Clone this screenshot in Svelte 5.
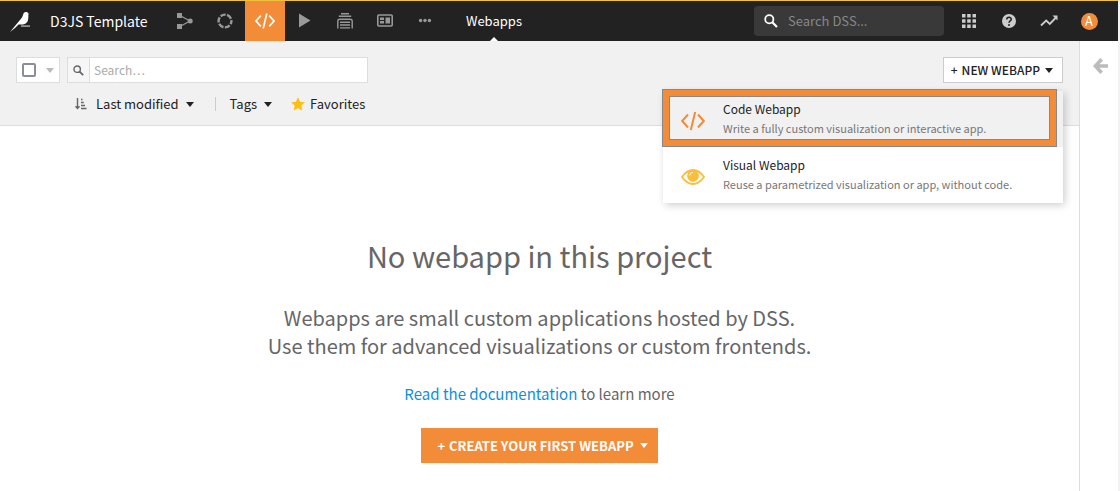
<script>
  const navItems = [
    { id: 'flow', label: 'Flow' },
    { id: 'lab', label: 'Lab' },
    { id: 'code', label: 'Code' },
    { id: 'jobs', label: 'Jobs' },
    { id: 'automation', label: 'Automation' },
    { id: 'dashboards', label: 'Dashboards' },
    { id: 'more', label: 'More' }
  ];

  const webappTypes = [
    {
      id: 'code',
      title: 'Code Webapp',
      desc: 'Write a fully custom visualization or interactive app.'
    },
    {
      id: 'visual',
      title: 'Visual Webapp',
      desc: 'Reuse a parametrized visualization or app, without code.'
    }
  ];

  let activeNav = $state('code');
  let menuOpen = $state(true);
  let highlighted = $state('code');
  let globalQuery = $state('');
  let query = $state('');

  function toggleMenu() {
    menuOpen = !menuOpen;
  }
</script>

{#snippet codeIcon(size)}
  <svg width={size} height={size} viewBox="0 0 24 24" fill="none" stroke="currentColor" stroke-width="2">
    <path d="M7 5.5 1.2 12 7 18.500M17 5.5l5.800 6.500-5.800 6.500M14.2 3 9.8 21" />
  </svg>
{/snippet}

{#snippet navIcon(id)}
  {#if id === 'flow'}
    <svg width="16" height="16" viewBox="0 0 16 16" fill="currentColor">
      <path d="M0 0h5v5H0zM0 11h5v5H0z" />
      <circle cx="13.2" cy="8" r="2.5" />
      <path d="M3 2.5 13 8 3 13.5" fill="none" stroke="currentColor" stroke-width="1.2" />
    </svg>
  {:else if id === 'lab'}
    <svg width="16" height="16" viewBox="0 0 16 16" fill="none" stroke="currentColor" stroke-width="2.4">
      <circle cx="8" cy="8" r="6.4" stroke-dasharray="5.3 1.4" stroke-dashoffset="2" />
    </svg>
  {:else if id === 'code'}
    {@render codeIcon(20)}
  {:else if id === 'jobs'}
    <svg width="16" height="16" viewBox="0 0 16 16" fill="currentColor"><path d="M2 .5 13.500 7.500 2 14.500z" /></svg>
  {:else if id === 'automation'}
    <svg width="16" height="16" viewBox="0 0 16 16" fill="none" stroke="currentColor" stroke-width="1.4">
      <path d="M4 .8h8M2.500 3.900V3.200h11v.700M.8 15.500V8.200Q.8 6.200 2.800 6.200h10.400q2 0 2 2v7.300M3 9.200h10M3 12h10M3 14.900h10" />
    </svg>
  {:else if id === 'dashboards'}
    <svg width="16" height="16" viewBox="0 0 16 16" fill="currentColor">
      <rect x=".8" y="2" width="14.4" height="11" rx="1" fill="none" stroke="currentColor" stroke-width="1.6" />
      <path d="M3 4.500h4V7H3zM3 8h4v2.500H3zM8.500 4.500H13v6H8.500z" />
    </svg>
  {:else}
    <svg width="16" height="16" viewBox="0 0 16 16" fill="currentColor">
      <circle cx="3.600" cy="7.500" r="1.700" /><circle cx="8" cy="7.500" r="1.700" /><circle cx="12.400" cy="7.500" r="1.700" />
    </svg>
  {/if}
{/snippet}

{#snippet searchIcon(size)}
  <svg width={size} height={size} viewBox="0 0 14 14" fill="none" stroke="currentColor" stroke-width="1.8">
    <circle cx="5.3" cy="5.3" r="4.1" /><path d="M8.3 8.3l4.7 4.7" stroke-width="2.2" />
  </svg>
{/snippet}

<div class="app">
  <header class="topbar">
    <a class="logo" href="#home" aria-label="Home">
      <svg width="20" height="20" viewBox="0 0 20 20" fill="#fff">
        <path d="M0 20 12 5.500C13.500 3 13 0 16 0c1.500 0 2 .7 2.200 1.600l1.100.500-1 .5c.3 5-.3 9.400-5.300 9.900H8.500L5 16z" />
        <path d="M11 13.600h9v.9h-9z" />
      </svg>
    </a>
    <a class="project" href="#project">D3JS Template</a>

    <nav class="nav">
      {#each navItems as item}
        <button
          class="nav-btn"
          class:active={item.id === activeNav}
          aria-label={item.label}
          onclick={() => (activeNav = item.id)}
        >{@render navIcon(item.id)}</button>
      {/each}
    </nav>

    <a class="section" href="#webapps">Webapps</a>

    <label class="global-search">
      {@render searchIcon(14)}
      <input type="text" placeholder="Search DSS..." aria-label="Search DSS" bind:value={globalQuery} />
    </label>

    <div class="tools">
      <button class="tool" aria-label="Applications">
        <svg width="14" height="14" viewBox="0 0 14 14" fill="currentColor">
          <path d="M0 0h3.500v3.500H0zM5.200 0h3.500v3.500H5.200zM10.500 0H14v3.500h-3.500zM0 5.200h3.500v3.500H0zM5.200 5.200h3.500v3.500H5.200zM10.500 5.200H14v3.500h-3.500zM0 10.500h3.500V14H0zM5.200 10.500h3.500V14H5.200zM10.500 10.500H14V14h-3.500z" />
        </svg>
      </button>
      <button class="tool" aria-label="Help">
        <svg width="14" height="14" viewBox="0 0 14 14">
          <circle cx="7" cy="7" r="7" fill="currentColor" />
          <path d="M4.700 5.500C4.700 2.600 9.300 2.600 9.300 5.300 9.300 7 7 6.900 7 8.800" fill="none" stroke="#222" stroke-width="1.500" />
          <circle cx="7" cy="11" r="1" fill="#222" />
        </svg>
      </button>
      <button class="tool" aria-label="Activity">
        <svg width="18" height="12" viewBox="0 0 18 12" fill="none" stroke="currentColor" stroke-width="1.800">
          <path d="M1 10.500l5.200-5 3.600 3.400L16 2.500" /><path d="M12.500 .5H17.500v5z" fill="currentColor" stroke="none" />
        </svg>
      </button>
      <button class="tool" aria-label="Profile"><span class="avatar">A</span></button>
    </div>
  </header>

  <div class="body">
    <main class="main">
      <div class="toolbar">
        <div class="row">
          <label class="select-all">
            <input type="checkbox" aria-label="Select all" />
            <span class="caret muted"></span>
          </label>
          <label class="filter">
            <span class="filter-icon">{@render searchIcon(11)}</span>
            <input type="text" placeholder="Search…" aria-label="Search webapps" bind:value={query} />
          </label>

          <div class="new-webapp">
            <button class="new-btn" aria-expanded={menuOpen} onclick={toggleMenu}>
              <span class="plus">+</span>NEW WEBAPP<span class="caret"></span>
            </button>
            {#if menuOpen}
              <div class="menu">
                {#each webappTypes as type}
                  <button class="menu-item" class:hovered={type.id === highlighted} onmouseenter={() => (highlighted = type.id)}>
                    <span class="menu-icon {type.id}">
                      {#if type.id === 'code'}
                        {@render codeIcon(24)}
                      {:else}
                        <svg width="24" height="24" viewBox="0 0 24 24">
                          <path d="M1 12Q6 5 12 5t11 7q-5 7-11 7T1 12z" fill="none" stroke="currentColor" stroke-width="1.800" />
                          <circle cx="12" cy="10.800" r="5.900" fill="currentColor" />
                          <path d="M8.700 10.500Q8.900 7.600 11.800 7.400" fill="none" stroke="#fff" stroke-width="1" />
                        </svg>
                      {/if}
                    </span>
                    <span class="menu-text">
                      <span class="menu-title">{type.title}</span>
                      <span class="menu-desc">{type.desc}</span>
                    </span>
                  </button>
                {/each}
                <div class="callout"></div>
              </div>
            {/if}
          </div>
        </div>

        <div class="row filters">
          <button class="link-btn sort">
            <svg width="12" height="12" viewBox="0 0 12 12" fill="none" stroke="#666" stroke-width="1.400">
              <path d="M2.500 0v10M.5 8.200l2 2.300 2-2.300M6 1.500h1.500M6 4.500h2.800M6 7.500h4M6 10.500h5.500" />
            </svg>
            Last modified<span class="caret"></span>
          </button>
          <span class="divider"></span>
          <button class="link-btn">Tags<span class="caret"></span></button>
          <button class="link-btn favorites">
            <svg width="14" height="14" viewBox="0 0 14 14" fill="#fdbf11">
              <path d="M7 .3l2.100 4.400 4.700.6-3.400 3.300.8 4.800L7 11.100l-4.200 2.300.8-4.800L.2 5.300l4.700-.6z" />
            </svg>
            Favorites
          </button>
        </div>
      </div>

      <section class="empty">
        <h1>No webapp in this project</h1>
        <p class="lead">
          Webapps are small custom applications hosted by DSS.<br />
          Use them for advanced visualizations or custom frontends.
        </p>
        <p class="docs"><a href="#docs">Read the documentation</a> to learn more</p>
        <button class="create-btn"><span class="plus">+</span>CREATE YOUR FIRST WEBAPP<span class="caret"></span></button>
      </section>
    </main>

    <aside class="side">
      <button class="collapse" aria-label="Open panel">
        <svg width="16" height="16" viewBox="0 0 16 16" fill="none" stroke="#bbb" stroke-width="3.600">
          <path d="M8.600 1.200 2.400 8l6.200 6.800M2.500 8H15" />
        </svg>
      </button>
    </aside>
  </div>
</div>

<style>
  :global(body) {
    background: #fff;
  }

  .app {
    min-height: 100vh;
    display: flex;
    flex-direction: column;
    box-sizing: border-box;
    border-right: 2px solid #f2f2f2;
    font-family: "Noto Sans CJK SC", "Noto Sans", sans-serif;
    font-size: 12px;
    line-height: 20px;
    color: #222;
  }

  button,
  input {
    font: inherit;
    color: inherit;
    margin: 0;
    padding: 0;
    border: none;
    background: none;
  }

  button {
    display: flex;
    align-items: center;
    cursor: pointer;
  }

  input {
    flex: 1;
    min-width: 0;
    outline: none;
  }

  svg {
    display: block;
    flex: none;
  }

  a {
    text-decoration: none;
  }

  .topbar {
    display: flex;
    align-items: center;
    height: 40px;
    border-top: 1px solid #f0c040;
    background: #222;
    color: #fff;
  }

  .logo {
    margin: 2px 20px 0 10px;
  }

  .project {
    width: 115px;
    color: #fff;
    font-size: 14px;
    white-space: nowrap;
  }

  .nav {
    display: flex;
  }

  .nav-btn {
    justify-content: center;
    width: 40px;
    height: 40px;
    color: #999;
  }

  .nav-btn.active {
    background: #f28c38;
    color: #fff;
  }

  .section {
    position: relative;
    margin-left: 21px;
    font-size: 13px;
    line-height: 40px;
    color: #fff;
  }

  .section::after {
    content: '';
    position: absolute;
    left: 50%;
    bottom: 0;
    margin-left: -4px;
    border: 4px solid transparent;
    border-top: none;
    border-bottom-color: #fff;
  }

  .global-search {
    display: flex;
    align-items: center;
    gap: 10px;
    box-sizing: border-box;
    width: 190px;
    height: 30px;
    margin-left: auto;
    padding: 0 10px;
    border-radius: 4px;
    background: #393939;
    font-size: 13px;
  }

  .global-search input::placeholder {
    color: #888;
  }

  .tools {
    display: flex;
    padding: 0 9px 0 5px;
  }

  .tool {
    justify-content: center;
    width: 40px;
    height: 40px;
    color: #ccc;
  }

  .avatar {
    width: 17px;
    height: 17px;
    border-radius: 50%;
    background: #f28c38;
    color: #fff;
    font-size: 13px;
    line-height: 16px;
  }

  .body {
    flex: 1;
    display: flex;
  }

  .main {
    flex: 1;
  }

  .toolbar {
    padding: 16px 16px 11px;
    border-bottom: 1px solid #ddd;
    background: #f1f1f1;
  }

  .row {
    display: flex;
    align-items: center;
  }

  .caret {
    border: 4px solid transparent;
    border-top: 5px solid currentColor;
    border-bottom: none;
    margin-left: 8px;
  }

  .caret.muted {
    color: #bbb;
  }

  .select-all {
    display: flex;
    align-items: center;
    box-sizing: border-box;
    width: 44px;
    height: 26px;
    padding-left: 5px;
    border: 1px solid #ddd;
    background: #fff;
  }

  .select-all input {
    appearance: none;
    flex: none;
    box-sizing: border-box;
    width: 14px;
    height: 14px;
    border: 2px solid #8c8ca0;
    border-radius: 2px;
  }

  .select-all .caret {
    margin-left: 10px;
  }

  .filter {
    display: flex;
    box-sizing: border-box;
    width: 301px;
    height: 26px;
    margin-left: 7px;
    border: 1px solid #ddd;
    background: #fff;
  }

  .filter-icon {
    display: flex;
    align-items: center;
    justify-content: center;
    width: 21px;
    border-right: 1px solid #ddd;
    background: #f6f6f6;
    color: #666;
  }

  .filter input {
    padding-left: 4px;
  }

  .filter input::placeholder {
    color: #aaa;
  }

  .new-webapp {
    position: relative;
    margin-left: auto;
  }

  .new-btn {
    box-sizing: border-box;
    height: 26px;
    padding: 0 9px 0 7px;
    border: 1px solid #ccc;
    background: #fff;
    font-weight: 500;
  }

  .new-btn .caret {
    margin-left: 5px;
  }

  .plus {
    margin-right: 4px;
  }

  .menu {
    position: absolute;
    top: 34px;
    right: 0;
    z-index: 1;
    width: 400px;
    background: #fff;
    box-shadow: 2px 2px 8px rgba(0, 0, 0, 0.2);
  }

  .menu-item {
    width: 100%;
    height: 56px;
    padding: 0 0 2px 18px;
    text-align: left;
  }

  .menu-item.hovered {
    background: #f1f1f1;
  }

  .menu-icon {
    margin-right: 18px;
    padding-top: 5px;
  }

  .menu-icon.code {
    color: #f28c38;
  }

  .menu-icon.visual {
    color: #fbbd3a;
  }

  .menu-text {
    display: flex;
    flex-direction: column;
  }

  .menu-desc {
    font-size: 11px;
    line-height: 18px;
    color: #777;
  }

  .callout {
    position: absolute;
    top: -2px;
    left: -1px;
    right: 6px;
    height: 56px;
    border: 1px solid #888;
    box-shadow: inset 0 0 0 6px #f28c38, inset 0 0 0 7px #888;
    pointer-events: none;
  }

  .filters {
    padding: 11px 0 0 59px;
    font-size: 13px;
  }

  .link-btn svg {
    margin-right: 9px;
  }

  .link-btn .caret {
    margin-left: 7px;
  }

  .divider {
    width: 1px;
    height: 14px;
    margin: 0 14px 0 21px;
    background: #ccc;
  }

  .link-btn.favorites {
    margin-left: 19px;
  }

  .favorites svg {
    margin-right: 5px;
  }

  .empty {
    display: flex;
    flex-direction: column;
    align-items: center;
    padding: 109px 20px 28px;
    text-align: center;
    color: #666;
  }

  h1 {
    margin: 0;
    font-size: 29px;
    font-weight: 400;
    line-height: 40px;
  }

  .lead {
    margin: 29px 0 0;
    font-size: 20px;
    line-height: 28px;
  }

  .docs {
    margin: 24px 0;
    font-size: 15px;
    line-height: 20px;
  }

  .docs a {
    color: #0f8fd6;
  }

  .create-btn {
    height: 35px;
    padding: 0 10px 0 16px;
    background: #f28c38;
    color: #fff;
    font-size: 13px;
    font-weight: 700;
  }

  .create-btn .caret {
    margin-left: 6px;
  }

  .side {
    width: 38px;
    border-left: 1px solid #ddd;
  }

  .collapse {
    margin: 17px 0 0 13px;
  }
</style>
